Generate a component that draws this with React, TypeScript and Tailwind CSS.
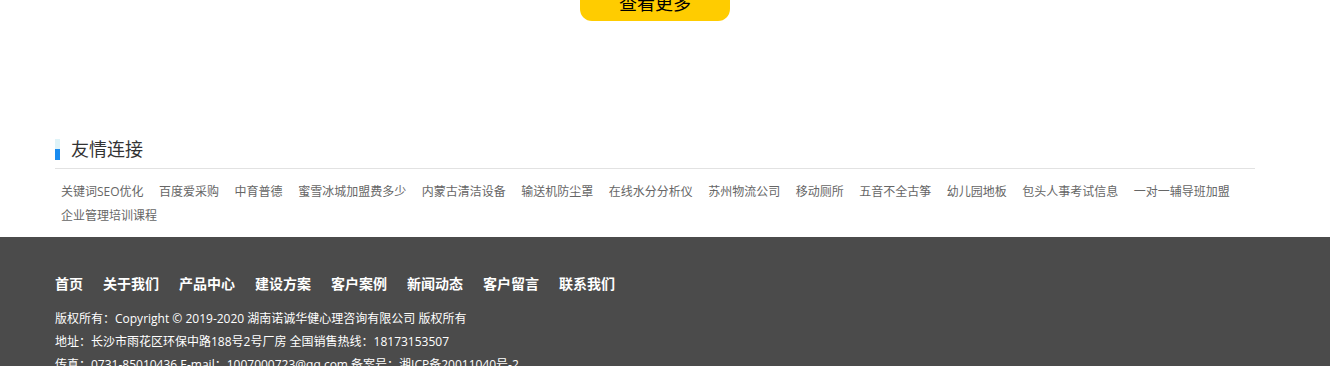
import React from 'react';

const links = [
  '关键词SEO优化',
  '百度爱采购',
  '中育普德',
  '蜜雪冰城加盟费多少',
  '内蒙古清洁设备',
  '输送机防尘罩',
  '在线水分分析仪',
  '苏州物流公司',
  '移动厕所',
  '五音不全古筝',
  '幼儿园地板',
  '包头人事考试信息',
  '一对一辅导班加盟',
  '企业管理培训课程',
];

const navItems = ['首页', '关于我们', '产品中心', '建设方案', '客户案例', '新闻动态', '客户留言', '联系我们'];

const font = { fontFamily: '"Open Sans", "Noto Sans CJK SC", sans-serif' };

export default function App() {
  return (
    <div className="w-[1330px] h-[366px] overflow-hidden bg-white" style={font}>
      {/* More button (cut off at top) */}
      <div className="w-[1310px] flex justify-center -mt-[15px]">
        <a className="w-[150px] h-[36px] bg-[#ffcc00] rounded-[12px] flex items-center justify-center text-[18px] text-black">
          查看更多
        </a>
      </div>

      {/* Friendly links */}
      <div className="w-[1200px] ml-[55px] mt-[116px]">
        <div className="flex items-center border-b border-[#e2e2e2] pb-[7px]">
          <div className="w-[5px] h-[21px] flex flex-col">
            <span className="h-[10px] bg-[#dff3f8]"></span>
            <span className="flex-1 bg-[#1a8cf0]"></span>
          </div>
          <h3 className="ml-[11px] text-[18px] leading-[24px] text-[#333]">友情连接</h3>
        </div>
        <div className="flex flex-wrap gap-x-[3.5px] mt-[11px] mb-[9px]">
          {links.map((l) => (
            <a key={l} className="px-[6px] text-[12px] leading-[24px] text-[#666]">
              {l}
            </a>
          ))}
        </div>
      </div>

      {/* Footer */}
      <div className="bg-[#4b4b4b] h-[200px]">
        <div className="w-[1200px] ml-[55px] pt-[36px]">
          <div className="flex gap-x-[20px]">
            {navItems.map((n) => (
              <a key={n} className="text-[14px] leading-[22px] font-bold text-white">
                {n}
              </a>
            ))}
          </div>
          <div className="mt-[12px] text-[12px] leading-[23px] text-white">
            <p>版权所有：Copyright © 2019-2020 湖南诺诚华健心理咨询有限公司 版权所有</p>
            <p>地址：长沙市雨花区环保中路188号2号厂房 全国销售热线：18173153507</p>
            <p>传真：0731-85010436 E-mail：1007000723@qq.com 备案号：湘ICP备20011040号-2</p>
          </div>
        </div>
      </div>
    </div>
  );
}
